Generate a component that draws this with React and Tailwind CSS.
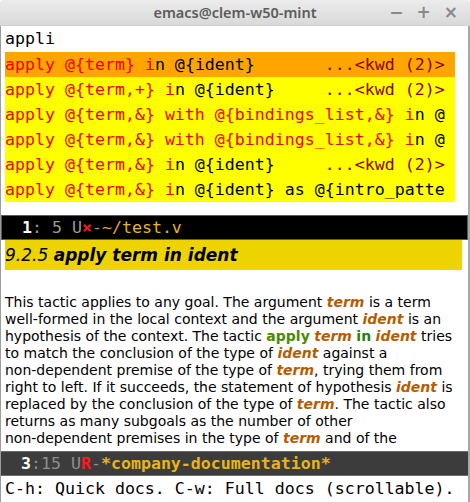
import React from 'react';

const mono = { fontFamily: '"DejaVu Sans Mono", "Liberation Mono", monospace' };
const sans = { fontFamily: '"DejaVu Sans", "Noto Sans", sans-serif' };

function Red({ children }) {
  return <span className="text-[#f00000]">{children}</span>;
}

function Anno({ children }) {
  return <span className="text-[#8b0000]">{children}</span>;
}

function Row({ bg, children }) {
  return (
    <div className={`h-[25px] leading-[25px] whitespace-pre px-0 ${bg}`}>{children}</div>
  );
}

function Arg({ children }) {
  return <span className="font-bold italic text-[#b65c00]">{children}</span>;
}

function Kw({ children, green }) {
  return <span className={`font-bold ${green}`}>{children}</span>;
}

export default function App() {
  return (
    <div className="w-[470px] h-[502px] bg-white overflow-hidden flex flex-col">
      {/* title bar */}
      <div className="h-[26px] shrink-0 bg-gradient-to-b from-[#ececec] to-[#d9d9d9] flex items-center relative rounded-t-[3px] border-b border-[#cfcfcf]">
        <div className="flex-1 text-center text-[14.5px] font-semibold text-[#5c5c5c]" style={{ fontFamily: '"Noto Sans", "DejaVu Sans", sans-serif' }}>
          emacs@clem-w50-mint
        </div>
        <div className="absolute right-[12px] top-0 h-full flex items-center gap-[13px] text-[#8a8a8a] text-[17px] font-bold" style={sans}>
          <span>−</span>
          <span>+</span>
          <span>×</span>
        </div>
      </div>

      <div className="flex-1 flex flex-col border-l border-[#9c9c9c] border-r-2 border-r-[#a8a8a8] min-h-0">
        {/* buffer */}
        <div className="h-[189px] shrink-0 text-[16.6px] text-black pl-[4px] pt-[1px]" style={mono}>
          <div className="h-[25px] leading-[24px]">appli</div>
          <div className="w-[450px]">
            <Row bg="bg-[#ffa500]"><Red>apply @{'{'}term{'}'} i</Red>n @{'{'}ident{'}'}       <Anno>...&lt;kwd (2)&gt;</Anno> </Row>
            <Row bg="bg-[#ffff00]"><Red>apply @{'{'}term,+{'}'} i</Red>n @{'{'}ident{'}'}     <Anno>...&lt;kwd (2)&gt;</Anno> </Row>
            <Row bg="bg-[#ffff00]"><Red>apply @{'{'}term,&amp;{'}'} with @{'{'}bindings_list,&amp;{'}'} i</Red>n @ </Row>
            <Row bg="bg-[#ffff00]"><Red>apply @{'{'}term,&amp;{'}'} with @{'{'}bindings_list,&amp;{'}'} i</Red>n @ </Row>
            <Row bg="bg-[#ffff00]"><Red>apply @{'{'}term,&amp;{'}'} i</Red>n @{'{'}ident{'}'}     <Anno>...&lt;kwd (2)&gt;</Anno> </Row>
            <Row bg="bg-[#ffff00]"><Red>apply @{'{'}term,&amp;{'}'} i</Red>n @{'{'}ident{'}'} as @{'{'}intro_patte </Row>
          </div>
        </div>

        {/* mode line 1 */}
        <div className="h-[25px] shrink-0 bg-black border border-[#5a5a5a] leading-[23px] text-[16.6px] whitespace-pre text-[#9a9a9a]" style={mono}>
          {'  '}<span className="text-white font-bold">1</span>: 5 U<span className="text-[#ff1a1a] font-bold">×</span>-<span className="text-[#e8a317]">~/</span><span className="text-[#e8b517]">test.v</span>
        </div>

        {/* documentation */}
        <div className="h-[211px] shrink-0 px-[4px] text-black" style={sans}>
          <div className="bg-[#edd400] h-[30px] leading-[30px] text-[17px] italic mr-[2px] whitespace-nowrap">
            9.2.5 <span className="font-bold">apply term in ident</span>
          </div>
          <div className="pt-[24px] text-[14px] leading-[17px] whitespace-nowrap">
            <div>This tactic applies to any goal. The argument <Arg>term</Arg> is a term</div>
            <div>well-formed in the local context and the argument <Arg>ident</Arg> is an</div>
            <div>hypothesis of the context. The tactic <Kw green="text-[#4e8a00]">apply</Kw> <Arg>term</Arg> <Kw green="text-[#2a7d10]">in</Kw> <Arg>ident</Arg> tries</div>
            <div>to match the conclusion of the type of <Arg>ident</Arg> against a</div>
            <div>non-dependent premise of the type of <Arg>term</Arg>, trying them from</div>
            <div>right to left. If it succeeds, the statement of hypothesis <Arg>ident</Arg> is</div>
            <div>replaced by the conclusion of the type of <Arg>term</Arg>. The tactic also</div>
            <div>returns as many subgoals as the number of other</div>
            <div>non-dependent premises in the type of <Arg>term</Arg> and of the</div>
          </div>
        </div>

        {/* mode line 2 */}
        <div className="h-[25px] shrink-0 bg-[#3c3c3c] border-y border-[#6a6a6a] leading-[23px] text-[16.6px] whitespace-pre text-[#8e8e8e]" style={mono}>
          {'  '}<span className="text-white font-bold">3</span>:15 U<span className="text-[#ff1a1a] font-bold">R</span>-<span className="text-[#e8b517] font-bold">*company-documentation*</span>
        </div>

        {/* echo area */}
        <div className="flex-1 pl-[4px] text-[16.6px] leading-[25px] text-black whitespace-pre" style={mono}>
          C-h: Quick docs. C-w: Full docs (scrollable).
        </div>
      </div>
    </div>
  );
}
